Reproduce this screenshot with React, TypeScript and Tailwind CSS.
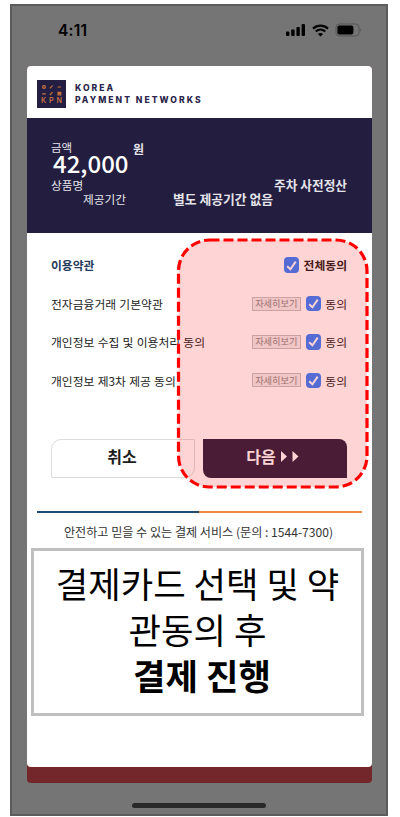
const TERMS = ['전자금융거래 기본약관', '개인정보 수집 및 이용처리 동의', '개인정보 제3차 제공 동의']

function Checkbox() {
  return (
    <span className="flex size-[15.5px] shrink-0 items-center justify-center rounded-[4px] bg-[#3382ff]">
      <svg width="15" height="15" viewBox="0 0 15 15" fill="none" stroke="white" strokeWidth="1.9">
        <path d="M3.2 8.2L6.4 11.3L11.7 3.6" />
      </svg>
    </span>
  )
}

function StatusBar() {
  return (
    <div className="flex h-[60px] items-start justify-between pt-[16px] pr-[23px] pl-[46px] text-black">
      <span className="font-[Inter] text-[15.5px] leading-[18px] font-semibold tracking-[0.2px]">4:11</span>
      <div className="flex items-center gap-[6px] pt-[1px]">
        <svg width="20" height="14" viewBox="0 0 20 14">
          <rect x="0" y="8.5" width="3.4" height="4.5" rx="1" />
          <rect x="5.2" y="6.5" width="3.4" height="6.5" rx="1" />
          <rect x="10.4" y="4" width="3.4" height="9" rx="1" />
          <rect x="15.6" y="1" width="3.4" height="12" rx="1" />
        </svg>
        <svg width="17" height="13" viewBox="0 0 17 13" fill="none" stroke="black" strokeWidth="2.2">
          <path d="M1 4.6C5.2 .6 11.8 .6 16 4.6" />
          <path d="M3.8 7.5C6.5 5 10.5 5 13.2 7.5" />
          <path d="M8.5 12.5L5.9 9.9C7.3 8.7 9.7 8.7 11.1 9.9Z" fill="black" stroke="none" />
        </svg>
        <svg width="28" height="14" viewBox="0 0 28 14">
          <rect x="1" y="1" width="23" height="12" rx="3.4" fill="none" stroke="#555" />
          <rect x="2.4" y="2.5" width="16" height="9" rx="2" />
          <path d="M25.4 5Q27.2 7 25.4 9Z" fill="#555" />
        </svg>
      </div>
    </div>
  )
}

function Logo() {
  return (
    <div className="flex h-[52px] pt-[14px] pl-[10px]">
      <svg width="29" height="28" viewBox="0 0 29 28">
        <rect width="29" height="28" fill="#231e42" />
        <g stroke="#c9713f" strokeWidth="1.2" fill="none">
          <circle cx="7" cy="7" r="1.4" />
          <path d="M12.8 8.4L15.6 5.6M20.5 7H24M5.3 13.8H8.8M12.8 15L15.6 12.2M21 12.3H23.8V15H21ZM21 13.6H23.8" />
        </g>
        <text x="4" y="23.3" fontSize="7.2" fontWeight="600" fontFamily="Inter, sans-serif" letterSpacing="2.9" fill="#c9713f">
          KPN
        </text>
      </svg>
      <div className="ml-[9px] flex flex-col pt-[2px] font-[Inter] text-[8.6px] leading-[12px] font-extrabold tracking-[2px] text-[#2b264b]">
        <span>KOREA</span>
        <span className="whitespace-nowrap">PAYMENT NETWORKS</span>
      </div>
    </div>
  )
}

function Summary() {
  return (
    <div className="h-[115px] bg-[#231e3f] pt-[22px] pr-[25px] pl-[24px] text-[#e4e3ea]">
      <div className="flex h-[38px] items-start">
        <div className="w-[82px]">
          <div className="text-[11.5px] leading-[15px]">금액</div>
          <div className="-mt-[2px] ml-[2px] text-[24px] leading-[19px] font-medium text-white">42,000</div>
        </div>
        <span className="text-[12px] leading-[17px] font-bold">원</span>
      </div>
      <div className="flex h-[14px] items-center justify-between">
        <span className="text-[11.7px]">상품명</span>
        <span className="text-[12.7px] font-bold">주차 사전정산</span>
      </div>
      <div className="flex h-[14px] items-center whitespace-nowrap">
        <span className="w-[90px] pl-[32px] text-[11.7px]">제공기간</span>
        <span className="pl-[32px] text-[12.8px] font-bold">별도 제공기간 없음</span>
      </div>
    </div>
  )
}

function Terms() {
  return (
    <div className="pt-[13px] pr-[25px] pl-[24px] text-[#222]">
      <div className="flex h-[38.4px] items-center justify-between text-[11.8px] font-bold">
        <span className="text-[#253b5b]">이용약관</span>
        <label className="flex items-center gap-[4.5px]">
          <Checkbox />
          전체동의
        </label>
      </div>
      {TERMS.map((term) => (
        <div key={term} className="flex h-[38.4px] items-center justify-between text-[11.8px] whitespace-nowrap">
          <span className="[word-spacing:0.6px]">{term}</span>
          <div className="flex items-center">
            <button className="mr-[5px] h-[14px] w-[49px] border border-[#c2c2c2] bg-[#eee] text-[9.2px] leading-[11px] text-[#888]">
              자세히보기
            </button>
            <Checkbox />
            <span className="ml-[4px]">동의</span>
          </div>
        </div>
      ))}
    </div>
  )
}

function Actions() {
  return (
    <div className="mt-[39px] flex gap-[8px] px-[24px]">
      <button className="h-[39px] w-[144px] rounded-tl-[10px] rounded-br-[10px] border border-[#dcdcdc] pr-[2px] pb-[5px] text-[16px] font-bold text-[#1d1d1d]">
        취소
      </button>
      <button className="flex h-[39px] w-[144px] items-center justify-center gap-[5px] rounded-tr-[8px] rounded-bl-[8px] bg-[#272240] pr-[5px] pb-[4px] text-[16px] font-bold text-white">
        다음
        <svg width="18" height="11" viewBox="0 0 18 11" fill="currentColor">
          <path d="M0 0L6 5.5L0 11ZM11.5 0L17.5 5.5L11.5 11Z" />
        </svg>
      </button>
    </div>
  )
}

export default function App() {
  return (
    <div className="h-[817px] w-[400px] overflow-hidden bg-white pt-[4px] pl-[10px] font-['Noto_Sans_CJK_KR',sans-serif]">
      <div className="h-[812px] w-[378px] border-2 border-[#5c5c5c] bg-[#757575]">
        <StatusBar />

        <div className="ml-[15px] h-[717px] w-[345px] rounded-[4px] bg-[#73272b]">
          <div className="relative h-[701px] overflow-hidden rounded-[4px] bg-white">
            <Logo />
            <Summary />
            <Terms />
            <Actions />

            <div className="mx-[10px] mt-[33px] flex h-[2px]">
              <div className="w-[162px] bg-[#1f4b74]" />
              <div className="flex-1 bg-[#f5893d]" />
            </div>
            <p className="mt-[10px] pr-[2px] text-center text-[12.1px] leading-[18px] whitespace-nowrap text-[#333]">
              안전하고 믿을 수 있는 결제 서비스 (문의 : 1544-7300)
            </p>

            <div className="mt-[7px] ml-[4px] h-[168px] w-[333px] border-3 border-[#bfbfbf] bg-white pt-[9px] text-center text-[35.3px] leading-[46px] whitespace-nowrap text-black">
              <p>결제카드 선택 및 약</p>
              <p>관동의 후</p>
              <p className="pl-[9px] font-bold">결제 진행</p>
            </div>

            {/* Highlighted consent area */}
            <svg className="absolute top-[171px] left-[148px]" width="197" height="256" viewBox="0 0 197 256">
              <rect
                x="3.5"
                y="3"
                width="188.5"
                height="247"
                rx="31"
                fill="#ff0000"
                fillOpacity="0.17"
                stroke="#ff0000"
                strokeWidth="3.2"
                strokeDasharray="10 4"
              />
            </svg>
          </div>
        </div>

        <div className="mx-auto mt-[20px] h-[5px] w-[134px] rounded-full bg-[#292929]" />
      </div>
    </div>
  )
}
